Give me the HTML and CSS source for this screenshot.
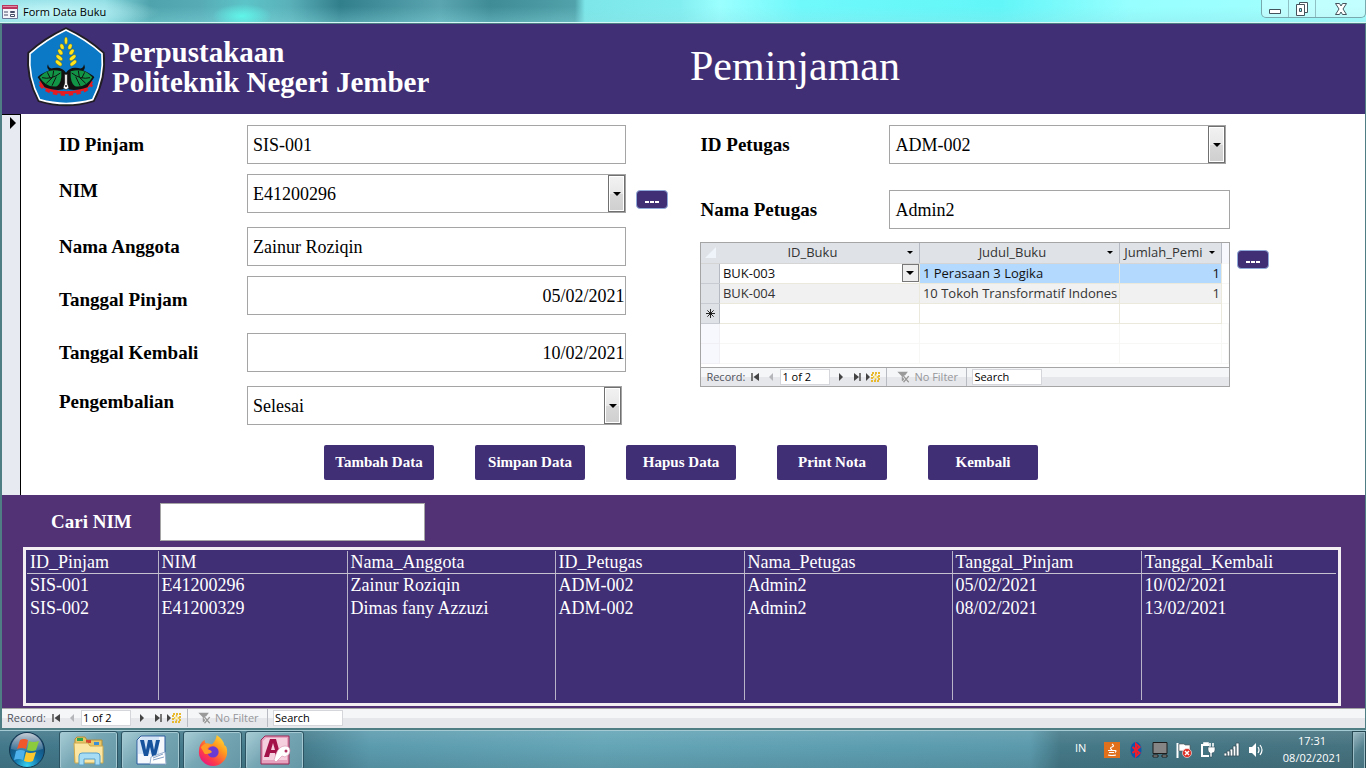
FILE: index.html
```html
<!DOCTYPE html>
<html lang="id">
<head>
<meta charset="utf-8">
<title>Form Data Buku</title>
<link rel="stylesheet" href="styles.css">
</head>
<body>
<svg class="sprite" aria-hidden="true">
  <symbol id="i-first" viewBox="0 0 16 16"><path d="M5 4v8" stroke="#444" stroke-width="1.4"/><path d="M12 4v8L6.500 8z" fill="#444"/></symbol>
  <symbol id="i-prev" viewBox="0 0 16 16"><path d="M10 4v8L6 8z" fill="#b4b6ba"/></symbol>
  <symbol id="i-next" viewBox="0 0 16 16"><path d="M6 4v8l4-4z" fill="#444"/></symbol>
  <symbol id="i-last" viewBox="0 0 16 16"><path d="M5 4v8l5-4z" fill="#444"/><path d="M11 4v8" stroke="#444" stroke-width="1.400"/></symbol>
  <symbol id="i-new" viewBox="0 0 16 16"><path d="M1 4v8l4-4z" fill="#444"/><path d="M7 4h7v8H7z" fill="none" stroke="#e8b92e" stroke-width="2" stroke-dasharray="2 1"/><path d="M8 8h6M10.500 5v6" stroke="#e8b92e" stroke-width="1.500"/><circle cx="10.500" cy="8" r="1.500" fill="#fff3b0"/></symbol>
  <symbol id="i-filter" viewBox="0 0 16 16"><path d="M1 2h12L9 7v7l-3-2V7z" fill="#9a9a9a"/><path d="M8 7l6 7M14 7l-6 7" stroke="#f3f3f5" stroke-width="3"/><path d="M8 7l6 7M14 7l-6 7" stroke="#999" stroke-width="1.600"/></symbol>
  <symbol id="i-arrow" viewBox="0 0 8 4"><path d="M0 0h8L4 4z"/></symbol>
</svg>

<header class="titlebar">
  <svg class="app-icon" viewBox="0 0 16 16"><path d="M.5 1.500h15v13H.5z" fill="#f4f5fb" stroke="#6b7799"/><path d="M0 1h16v4H0z" fill="#b8385f"/><path d="M1 2h14v1H1z" fill="#e28aa3"/><path d="M2 8h4M2 11h4" stroke="#444c66"/><path d="M8.500 7.500h4v1h-4zM8.500 10.500h4v2h-4z" fill="#fff" stroke="#444c66"/></svg>
  <h1 class="title">Form Data Buku</h1>
  <div class="controls">
    <button type="button" class="ctl" aria-label="Minimize"><svg viewBox="0 0 16 16"><path d="M2.500 8.500h11v4h-11z" fill="#fff" stroke="#45545c"/></svg></button>
    <button type="button" class="ctl" aria-label="Restore"><svg viewBox="0 0 16 16"><path d="M5.500 1.500h8v10h-8z" fill="#fff" stroke="#45545c"/><path d="M2.500 3.500h8v11h-8z" fill="#fff" stroke="#45545c"/><path d="M5.500 7.500h2v3h-2z" fill="#8ff" stroke="#45545c"/></svg></button>
    <button type="button" class="ctl ctl-close" aria-label="Close"><svg viewBox="0 0 16 16"><path d="M2.500 2.500h4L8 5l1.500-2.500h4L10 8l3.500 5.500h-4L8 11l-1.500 2.500h-4L6 8z" fill="#fff" stroke="#45545c"/></svg></button>
  </div>
</header>

<main class="window">
  <section class="banner">
    <svg class="logo" viewBox="0 0 270 270" role="img" aria-label="Logo">
      <path d="M138 15Q202 44 249 88Q257 160 220 229Q138 254 57 229Q20 160 27 88Q74 44 138 15z" fill="#0b79c5" stroke="#211d24" stroke-width="10"/>
      <path d="M138 18Q200 47 246 89Q253 160 218 227Q138 250 59 227Q24 160 30 89Q77 47 138 18z" fill="#0b79c5" stroke="#fff" stroke-width="5"/>
      <g fill="none" stroke="#e31b23"><path d="M60 172Q78 204 138 206Q198 204 216 172" stroke-width="8"/><path d="M62 180Q80 208 138 209Q196 208 214 180" stroke-width="13" stroke-dasharray="13 10"/></g>
      <path d="M84 121Q86 137 101 132Q125 127 138 146Q151 127 175 132Q190 137 192 121Q198 133 190 139Q220 154 223 160L202 190Q158 205 138 192Q118 205 74 190L53 160Q56 153 88 139Q78 132 84 121z" fill="#111"/>
      <path d="M59 160Q83 130 124 142Q126 177 111 187Q78 192 59 160zM217 160Q193 130 152 142Q150 177 165 187Q198 192 217 160z" fill="#129447"/>
      <path d="M66 161Q94 168 121 147M82 145l9 18M101 140l-3 20M79 178l18-17M96 185l13-27M210 161Q182 168 155 147M194 145l-9 18M175 140l3 20M197 178l-18-17M180 185l-13-27" fill="none" stroke="#111" stroke-width="3"/>
      <path d="M134 151h8v27l5 14-9 5-9-5 5-14z" fill="#fff" stroke="#111" stroke-width="2"/><circle cx="138" cy="186" r="3" fill="#111"/>
      <g fill="#ffe51a" stroke="#1e3b45" stroke-width="1"><ellipse cx="138" cy="50" rx="5" ry="11"/>
      <ellipse cx="126" cy="68" rx="6" ry="9" transform="rotate(-20 126 68)"/><ellipse cx="150" cy="68" rx="6" ry="9" transform="rotate(20 150 68)"/>
      <ellipse cx="121" cy="84" rx="6" ry="10" transform="rotate(-35 121 84)"/><ellipse cx="155" cy="84" rx="6" ry="10" transform="rotate(35 155 84)"/>
      <ellipse cx="118" cy="101" rx="6" ry="12" transform="rotate(-50 118 101)"/><ellipse cx="158" cy="101" rx="6" ry="12" transform="rotate(50 158 101)"/>
      <ellipse cx="116" cy="117" rx="6" ry="12" transform="rotate(-50 116 117)"/><ellipse cx="160" cy="117" rx="6" ry="12" transform="rotate(50 160 117)"/></g>
    </svg>
    <p class="brand">Perpustakaan<br>Politeknik Negeri Jember</p>
    <h2 class="heading">Peminjaman</h2>
  </section>

  <section class="detail">
    <div class="selector"><svg viewBox="0 0 6 12"><path d="M0 0v12l6-6z"/></svg></div>
    <form class="form">
      <div class="panels">
        <div class="labels labels-left">
          <label for="pinjam">ID Pinjam</label>
          <label for="nim">NIM</label>
          <label for="anggota">Nama Anggota</label>
          <label for="tglpinjam">Tanggal Pinjam</label>
          <label for="tglkembali">Tanggal Kembali</label>
          <label for="status">Pengembalian</label>
        </div>
        <div class="fields fields-left">
          <input class="field" id="pinjam" type="text" value="SIS-001">
          <div class="combo"><select class="field" id="nim"><option>E41200296</option></select><span class="drop"><svg><use href="#i-arrow"/></svg></span></div>
          <input class="field" id="anggota" type="text" value="Zainur Roziqin">
          <input class="field date" id="tglpinjam" type="text" value="05/02/2021">
          <input class="field date" id="tglkembali" type="text" value="10/02/2021">
          <div class="combo combo-inset"><select class="field" id="status"><option>Selesai</option></select><span class="drop"><svg><use href="#i-arrow"/></svg></span></div>
        </div>
        <div class="side side-left"><button type="button" class="more" aria-label="Cari anggota"><i></i><i></i><i></i></button></div>
        <div class="right">
          <div class="petugas">
            <div class="labels labels-right">
              <label for="petugas">ID Petugas</label>
              <label for="namapetugas">Nama Petugas</label>
            </div>
            <div class="fields fields-right">
              <div class="combo combo-inset"><select class="field" id="petugas"><option>ADM-002</option></select><span class="drop"><svg><use href="#i-arrow"/></svg></span></div>
              <input class="field" id="namapetugas" type="text" value="Admin2">
            </div>
          </div>
          <div class="subform">
            <table class="sheet">
              <colgroup><col class="s-sel"><col class="s-wide"><col class="s-wide"><col class="s-num"><col></colgroup>
              <thead>
                <tr><th class="corner"><svg viewBox="0 0 12 12"><path d="M12 0v12H0z" fill="#eef4fa"/></svg></th>
                <th><div class="colhead"><span>ID_Buku</span><svg><use href="#i-arrow"/></svg></div></th>
                <th><div class="colhead"><span>Judul_Buku</span><svg><use href="#i-arrow"/></svg></div></th>
                <th><div class="colhead"><span>Jumlah_Pemi</span><svg><use href="#i-arrow"/></svg></div></th><td class="void"></td></tr>
              </thead>
              <tbody>
                <tr class="current"><th></th><td class="editing"><div class="cell"><span>BUK-003</span><button type="button" class="celldrop" aria-label="Pilih buku"><svg><use href="#i-arrow"/></svg></button></div></td><td>1 Perasaan 3 Logika</td><td class="num">1</td><td class="void"></td></tr>
                <tr class="alt"><th></th><td>BUK-004</td><td>10 Tokoh Transformatif Indones</td><td class="num">1</td><td class="void"></td></tr>
                <tr><th><svg class="star" viewBox="0 0 10 10"><path d="M5 0v10M0 5h10M1.500 1.500l7 7M8.500 1.500l-7 7" stroke="#111"/></svg></th><td></td><td></td><td></td><td class="void"></td></tr>
                <tr class="blank"><th></th><td></td><td></td><td></td><td></td></tr>
                <tr class="blank"><th></th><td></td><td></td><td></td><td></td></tr>
              </tbody>
            </table>
            <div class="recnav">
              <label class="rec" for="rec1">Record:</label>
              <button type="button" aria-label="First"><svg><use href="#i-first"/></svg></button>
              <button type="button" aria-label="Previous"><svg><use href="#i-prev"/></svg></button>
              <input class="pos" id="rec1" type="text" value="1 of 2">
              <button type="button" aria-label="Next"><svg><use href="#i-next"/></svg></button>
              <button type="button" aria-label="Last"><svg><use href="#i-last"/></svg></button>
              <button type="button" aria-label="New"><svg><use href="#i-new"/></svg></button>
              <span class="filter"><svg><use href="#i-filter"/></svg>No Filter</span>
              <input class="search" type="text" aria-label="Search" value="Search">
            </div>
          </div>
        </div>
        <div class="side side-right"><button type="button" class="more" aria-label="Cari buku"><i></i><i></i><i></i></button></div>
      </div>
      <div class="actions">
        <button type="button">Tambah Data</button>
        <button type="button">Simpan Data</button>
        <button type="button">Hapus Data</button>
        <button type="button">Print Nota</button>
        <button type="button">Kembali</button>
      </div>
    </form>
  </section>

  <section class="lookup">
    <div class="finder"><label for="cari">Cari NIM</label><input class="field" id="cari" type="text"></div>
    <div class="list">
      <table>
        <colgroup><col class="c-id"><col class="c-mid"><col class="c-name"><col class="c-mid"><col class="c-name"><col class="c-mid"><col></colgroup>
        <thead><tr><th>ID_Pinjam</th><th>NIM</th><th>Nama_Anggota</th><th>ID_Petugas</th><th>Nama_Petugas</th><th>Tanggal_Pinjam</th><th>Tanggal_Kembali</th></tr></thead>
        <tbody>
          <tr><td>SIS-001</td><td>E41200296</td><td>Zainur Roziqin</td><td>ADM-002</td><td>Admin2</td><td>05/02/2021</td><td>10/02/2021</td></tr>
          <tr><td>SIS-002</td><td>E41200329</td><td>Dimas fany Azzuzi</td><td>ADM-002</td><td>Admin2</td><td>08/02/2021</td><td>13/02/2021</td></tr>
          <tr class="rest"><td></td><td></td><td></td><td></td><td></td><td></td><td></td></tr>
        </tbody>
      </table>
    </div>
  </section>

  <div class="recnav recnav-main">
    <label class="rec" for="rec2">Record:</label>
    <button type="button" aria-label="First"><svg><use href="#i-first"/></svg></button>
    <button type="button" aria-label="Previous"><svg><use href="#i-prev"/></svg></button>
    <input class="pos" id="rec2" type="text" value="1 of 2">
    <button type="button" aria-label="Next"><svg><use href="#i-next"/></svg></button>
    <button type="button" aria-label="Last"><svg><use href="#i-last"/></svg></button>
    <button type="button" aria-label="New"><svg><use href="#i-new"/></svg></button>
    <span class="filter"><svg><use href="#i-filter"/></svg>No Filter</span>
    <input class="search" type="text" aria-label="Search" value="Search">
  </div>
</main>

<footer class="taskbar">
  <button type="button" class="start" aria-label="Start">
    <svg viewBox="0 0 38 38">
      <defs><radialGradient id="orb" cx=".5" cy=".95" r=".9"><stop offset="0" stop-color="#36d3f2"/><stop offset=".4" stop-color="#1272a8"/><stop offset="1" stop-color="#173d62"/></radialGradient><linearGradient id="gloss" x2="0" y2="1"><stop offset="0" stop-color="#fff" stop-opacity=".75"/><stop offset="1" stop-color="#fff" stop-opacity=".1"/></linearGradient></defs>
      <circle cx="19" cy="19" r="17.500" fill="url(#orb)" stroke="#12364f"/><path d="M3 18a16 16 0 0 1 32 0Q19 23 3 18z" fill="url(#gloss)"/>
      <path d="M12 9q4-2 8 0l-2 9q-4-2-9 0z" fill="#f0572a"/><path d="M21 10q4 2 10 0l-3 9q-4 2-9 0z" fill="#8ccb3d"/><path d="M8 20q5-2 9 0l-2 9q-4-2-9 0z" fill="#4fb1ec"/><path d="M18 21q4 2 10 0l-3 9q-4 2-9 0z" fill="#fdc82f"/>
    </svg>
  </button>
  <nav class="apps">
    <button type="button" aria-label="Explorer"><svg viewBox="0 0 34 32"><path d="M3 5l2-2h8l2 3h15v22H3z" fill="#e8c768" stroke="#b08d3a"/><path d="M5 4h6v3H5z" fill="#2fa44a"/><path d="M14 6h5v3h-5z" fill="#d84a2e"/><path d="M22 8h5v3h-5z" fill="#3b8fd6"/><path d="M2 9h14l2 3h13v17H3z" fill="#fbe7a3" stroke="#cda94d"/><path d="M7 31V22q0-3 3-3h15q3 0 3 3v9h-5v-6H12v6z" fill="#a7dcf5" stroke="#569fcb"/></svg></button>
    <button type="button" aria-label="Word"><svg viewBox="0 0 34 32"><path d="M3 6l4-4h24v28H3z" fill="#f4f8fd" stroke="#2a5b9f"/><path d="M4 6l4-3h17v17H4z" fill="#d4e5f8"/><path d="M6 6h4l2 10 2-10h4l2 10 2-10h4l-4 16h-4l-2-9-2 9h-4z" fill="#17529d"/><path d="M17 23l14-5 1 12H16z" fill="#fff" stroke="#9bb2cf"/><path d="M19 24l10-4M19 26l11-3" stroke="#86a3c8"/></svg></button>
    <button type="button" aria-label="Firefox"><svg viewBox="0 0 34 34"><defs><linearGradient id="fox" x1="1" y1="0" x2=".2" y2="1"><stop offset="0" stop-color="#fff044"/><stop offset=".4" stop-color="#ff9a1f"/><stop offset=".75" stop-color="#ff3b4a"/><stop offset="1" stop-color="#e31587"/></linearGradient></defs><path d="M21 1q8 6 8 11 3 1 3 7A15 15 0 0 1 2 19Q2 10 8 6q0 3 2 5 4-1 6 0 4-4 5-10z" fill="url(#fox)"/><circle cx="17" cy="19" r="6" fill="#6b3ad4"/><path d="M4 14q6-7 12-2-4 1-5 4 4 1 5 3-3 3-8 2z" fill="#ff9a25"/></svg></button>
    <button type="button" aria-label="Access"><svg viewBox="0 0 34 32"><path d="M3 6l4-4h24v28H3z" fill="#e7a2bf" stroke="#9d2454"/><path d="M5 7l3-3h21v22H5z" fill="#f5cfdd"/><path fill-rule="evenodd" d="M12 5h6l5 18h-5l-1-4h-5l-1 4H6zm3 4l-2 7h4z" fill="#a31349"/><path d="M18 20q3-8 9-8 5 0 5 5 0 4-5 6l-3-1-6 6-2-2z" fill="#fff" stroke="#d98bab" stroke-width=".6"/><circle cx="28" cy="17" r="1.500" fill="#b33364"/></svg></button>
  </nav>
  <div class="tray">
    <span class="lang">IN</span>
    <svg viewBox="0 0 16 16"><path d="M0 0h16v16H0z" fill="#e0701c"/><path d="M8 2q3 2 0 3t0 3M4 8.500h7q2 0 0 2M5 10.500h5M4 13q4 1 8 0" fill="none" stroke="#fff" stroke-width="1.200"/></svg>
    <svg viewBox="0 0 16 16"><ellipse cx="8" cy="8" rx="5.500" ry="8" fill="#0c58ac"/><path d="M4.500 5l7 6L8 14V2l3.500 3-7 6" fill="none" stroke="#f01e2c" stroke-width="2"/></svg>
    <svg viewBox="0 0 16 16"><path d="M1 .5h14v11H1z" fill="#858585" stroke="#1c1c1c"/><path d="M1 13h5v2H1zM10 13h5v2h-5z" fill="#aaa" stroke="#1c1c1c"/></svg>
    <svg viewBox="0 0 16 16"><path d="M1.500 1v15" stroke="#fff" stroke-width="2"/><path d="M3 2h5l1 1h5v7H8L7 9H3z" fill="#fff" stroke="#555" stroke-width=".6"/><circle cx="11" cy="11" r="4.500" fill="#dc2b20" stroke="#fff" stroke-width=".6"/><path d="M9 9l4 4M13 9l-4 4" stroke="#fff" stroke-width="1.500"/></svg>
    <svg viewBox="0 0 16 16"><path d="M9 3H2v11h7" fill="none" stroke="#fff" stroke-width="2"/><path d="M4 1h4v2H4zM10 1v4M13 1v4" stroke="#fff" stroke-width="1.600" fill="#fff"/><path d="M8 5h7v3q0 3-3 3v4H10v-4Q8 10 8 8z" fill="#fff" stroke="#34525e" stroke-width=".6"/></svg>
    <svg viewBox="0 0 16 16"><path d="M0 11h3v3H0zM3 9h3v5H3zM6 7h3v7H6zM9 4h3v10H9zM12 1h3v13h-3z" fill="#fff" stroke="#38545e" stroke-width=".8"/></svg>
    <svg viewBox="0 0 16 16"><path d="M1 5h3l4-4v14l-4-4H1z" fill="#fff"/><path d="M10 5q2 3 0 6M12 3q4 5 0 10" fill="none" stroke="#fff" stroke-width="1.200"/></svg>
    <time class="clock">17:31<br>08/02/2021</time>
  </div>
  <button type="button" class="desk" aria-label="Show desktop"></button>
</footer>
</body>
</html>
```
FILE: styles.css
```css
* { box-sizing: border-box; }

:root {
  --serif: "Liberation Serif", serif;
  --sans: "Open Sans", "Noto Sans", sans-serif;
  --indigo: #412f76;
}

body {
  margin: 0;
  min-height: 100vh;
  display: flex;
  flex-direction: column;
  font-family: var(--serif);
  font-size: 18px;
  color: #000;
  background: #fff;
}

button, input, select { font: inherit; color: inherit; margin: 0; border-radius: 0; }
button { padding: 0; border: 0; background: none; }
svg { display: block; }
.sprite { position: absolute; width: 0; height: 0; }

/* Title bar */
.titlebar {
  display: flex;
  height: 23px;
  padding-left: 2px;
  gap: 5px;
  border-bottom: 1px solid #d5f7f5;
  background:
    radial-gradient(ellipse 30px 12px at 242px 16px, #5ff5e8, transparent),
    radial-gradient(ellipse 110px 16px at 50px 12px, #c4f6f8, transparent),
    linear-gradient(transparent 30%, #8ce0e455),
    linear-gradient(90deg, #8fdfe6 0, #8bdbe2 105px, #4fa3ac 150px, #57abb5 200px, #5cc4c8 245px, #5ab0b8 290px, #327f8c 340px, #5aa5b0 440px, #3f8b96 490px, #51a2aa 575px, #7ce6e8 585px, #83eef0 680px, #9bffff 720px, #6ff9fb 800px, #62f6f8 1000px, #97ffff 1130px, #a5ffff 100%);
}
.app-icon { width: 16px; height: 16px; margin-top: 4px; }
.title { margin: 0; font: 11px/23px var(--sans); }
.controls {
  display: flex;
  width: 105px;
  height: 18px;
  margin-left: auto;
  border: 1px solid #78a9ae;
  border-top: 0;
  border-radius: 0 0 5px 5px;
  background: #ffffff55;
}
.ctl { width: 27px; display: grid; place-items: center; border-right: 1px solid #8fc0c4; }
.ctl svg { width: 16px; height: 16px; }
.ctl-close { flex: 1; border-right: 0; }

.window {
  flex: 1;
  display: flex;
  flex-direction: column;
  border: solid #4f7f84;
  border-width: 1px 1px 2px 2px;
}

/* Banner */
.banner {
  display: grid;
  grid-template-columns: 92px 578px 1fr;
  align-items: center;
  height: 90px;
  padding-left: 18px;
  color: #fff;
  background: var(--indigo);
}
.logo { width: 90px; height: 90px; }
.brand { margin: 0; font-size: 29px; line-height: 30px; font-weight: bold; padding-bottom: 4px; }
.heading { margin: 0; font-size: 42px; line-height: 48px; font-weight: normal; padding-bottom: 6px; }

/* Detail */
.detail { display: flex; }
.selector {
  width: 19px;
  padding: 2px 0 0 8px;
  border: solid #000;
  border-width: 1px 1px 0 0;
  background: #e7eaf0;
}
.selector svg { width: 6px; height: 12px; }
.form { flex: 1; background: #fff; padding-bottom: 15px; }
.panels {
  display: grid;
  grid-template-columns: 188px 379fr 74px 529fr 135px;
  padding: 11px 0 0 38px;
}
.labels { display: grid; font-size: 19px; line-height: 22px; font-weight: bold; align-content: start; padding-top: 9px; }
.labels-left { grid-template-rows: 46px 56px 53px 53px 49px 22px; }
.labels-right { grid-template-rows: 65px 22px; }
.fields { display: grid; align-content: start; align-items: start; }
.fields-left { grid-template-rows: 49px 53px 49px 57px 53px 38px; }
.fields-right { grid-template-rows: 65px 38px; }
.field {
  width: 100%;
  height: 39px;
  padding: 0 5px;
  border: 1px solid #a5a5a5;
  background: #fff;
  appearance: none;
  outline: 0;
}
input.field { padding-top: 2px; }
.fields .date { text-align: right; padding-right: 1px; }
.combo { position: relative; }
.combo-inset { margin-right: 4px; }
.drop {
  position: absolute;
  inset: 1px 1px 1px auto;
  width: 17px;
  display: grid;
  place-items: center;
  border: 1px solid #707070;
  box-shadow: inset 0 0 0 1px #fff;
  background: linear-gradient(#f2f2f2, #e8e8e8 50%, #d8d8d8 50%, #cfcfcf);
  pointer-events: none;
}
.drop svg { width: 8px; height: 4px; }
.side-left { padding: 65px 0 0 10px; }
.side-right { padding: 125px 0 0 7px; }
.more {
  display: flex;
  align-items: end;
  justify-content: center;
  gap: 1px;
  width: 32px;
  height: 19px;
  padding-bottom: 5px;
  border: 1px solid #8fa9d8;
  border-radius: 4px;
  background: var(--indigo);
}
.more i { width: 4px; height: 2px; background: #fff; }
.petugas { display: grid; grid-template-columns: 189px 1fr; height: 117px; }

/* Datasheet */
.subform { border: 1px solid #a5a5a5; background: #fff; }
.sheet {
  width: 100%;
  table-layout: fixed;
  border-collapse: collapse;
  font: 13px/19px var(--sans);
  color: #333;
}
.s-sel { width: 18px; }
.s-wide { width: 200px; }
.s-num { width: 102px; }
.sheet tr { height: 20px; }
.sheet th { padding: 0; font-weight: normal; background: #dfe3e8; border-right: 1px solid #b5bac2; border-bottom: 1px solid #c8ccd2; }
.sheet thead th { border-bottom-color: #d4d5d4; }
.sheet td { padding: 0 0 0 3px; white-space: nowrap; border-right: 1px solid #ebe8dc; border-bottom: 1px solid #ebe8dc; }
.sheet .num { text-align: right; padding-right: 1px; }
.sheet .void { border-color: #f7f7f5; border-right: 0; }
.sheet thead .void { background: #f7f8fd; }
.sheet .corner { border-right-color: #dfe3e8; }
.corner svg { width: 11px; height: 11px; margin: 0 auto; }
.star { width: 9px; height: 9px; margin: 0 auto; }
.colhead { display: flex; align-items: center; padding: 0 6px 0 2px; height: 19px; }
.colhead span { flex: 1; text-align: center; }
.colhead svg { width: 6px; height: 3px; margin-left: 4px; }
.current td { background: #b3d9ff; color: #111; }
.current .editing, .current .void { background: #fff; }
.alt td { background: #f1f1f1; }
.alt .void { background: #fff; }
.cell { display: flex; justify-content: space-between; }
.celldrop { width: 17px; height: 18px; display: grid; place-items: center; border: 1px solid #777; background: #eee; }
.celldrop svg { width: 8px; height: 4px; }
.sheet .blank td { border-color: #f7f7f5; }
.sheet .blank th { background: #f7f8fd; border-color: #f0f0f4; }

/* Record navigator */
.recnav {
  display: flex;
  align-items: center;
  height: 20px;
  border-top: 1px solid #a5a5a5;
  font: 11px/16px var(--sans);
  color: #000;
  background: linear-gradient(#f5f6f8 50%, #e6e7eb 50%);
}
.subform .recnav { margin-top: 3px; height: 19px; }
.rec { width: 46px; padding-left: 5px; color: #50545c; }
.recnav button, .recnav button svg { width: 16px; height: 16px; }
.pos { width: 50px; margin: 0 3px 0 1px; }
.search { width: 70px; margin-left: 5px; }
.pos, .search { height: 16px; padding: 0 1px; border: 1px solid #d5d6dc; background: #fff; outline: 0; }
.filter {
  display: flex;
  gap: 3px;
  align-items: center;
  width: 81px;
  height: 18px;
  margin-left: 5px;
  padding-left: 9px;
  border: solid #b9bbc2;
  border-width: 0 1px;
  color: #96979a;
}
.filter svg { width: 15px; height: 14px; }

.actions { display: flex; justify-content: center; gap: 41px; padding: 21px 24px 0 0; }
.actions button { width: 110px; height: 35px; font-size: 15px; font-weight: bold; color: #fff; border-radius: 2px; background: var(--indigo); }

/* Lookup */
.lookup { flex: 1; display: flex; flex-direction: column; gap: 6px; padding: 8px 24px 2px 21px; color: #fff; background: #523175; }
.finder { display: flex; align-items: center; }
.finder label { width: 137px; padding-left: 28px; font-size: 19px; font-weight: bold; }
.finder .field { width: 265px; height: 38px; color: #000; }
.list { flex: 1; display: flex; padding: 1px 2px 3px 1px; border: 3px solid #f2eef2; background: var(--indigo); }
.list table { flex: 1; width: 100%; table-layout: fixed; border-collapse: collapse; line-height: 22px; }
.list th, .list td { height: 23px; padding: 0 0 0 3px; text-align: left; font-weight: normal; border-left: 1px solid #b9b4c8; }
.list th:first-child, .list td:first-child { border-left: 0; }
.list thead th { height: 22px; border-bottom: 1px solid #c6c2d0; }
.list .rest td { height: 80px; }
.c-id { width: 131px; }
.c-mid { width: 189px; }
.c-name { width: 208px; }

/* Taskbar */
.taskbar {
  display: flex;
  height: 40px;
  border-top: 1px solid #a4cbd3;
  background: linear-gradient(#ffffff18, transparent 40%, #00000018), linear-gradient(90deg, #42788a 0, #457c8c 300px, #5b9bae 370px, #64a5b6 600px, #5c9db0 900px, #5b9aac 1030px, #457988 1060px, #46727f 100%);
}
.start { width: 53px; padding-left: 8px; }
.start svg { width: 38px; height: 38px; }
.apps { display: flex; gap: 3px; padding-left: 6px; }
.apps button {
  display: grid;
  place-items: center;
  width: 59px;
  height: 39px;
  border: 1px solid #2c5361;
  border-radius: 3px;
  box-shadow: inset 0 0 0 1px #a5c9d2;
  background: linear-gradient(135deg, #a7cdd6, #76a6b3 45%, #6497a6);
}
.apps svg { width: 34px; height: 32px; }
.tray { display: flex; align-items: center; gap: 8px; margin-left: auto; color: #fff; font: 11px/17px var(--sans); }
.tray > svg { width: 16px; height: 16px; }
.lang { width: 21px; padding-bottom: 6px; }
.clock { width: 80px; text-align: center; padding-bottom: 2px; }
.desk { width: 14px; height: 39px; border: 1px solid #274954; box-shadow: inset 0 0 0 1px #9dbdc6; background: linear-gradient(135deg, #a0bdc6, #54808e 50%, #44707e); }
```
